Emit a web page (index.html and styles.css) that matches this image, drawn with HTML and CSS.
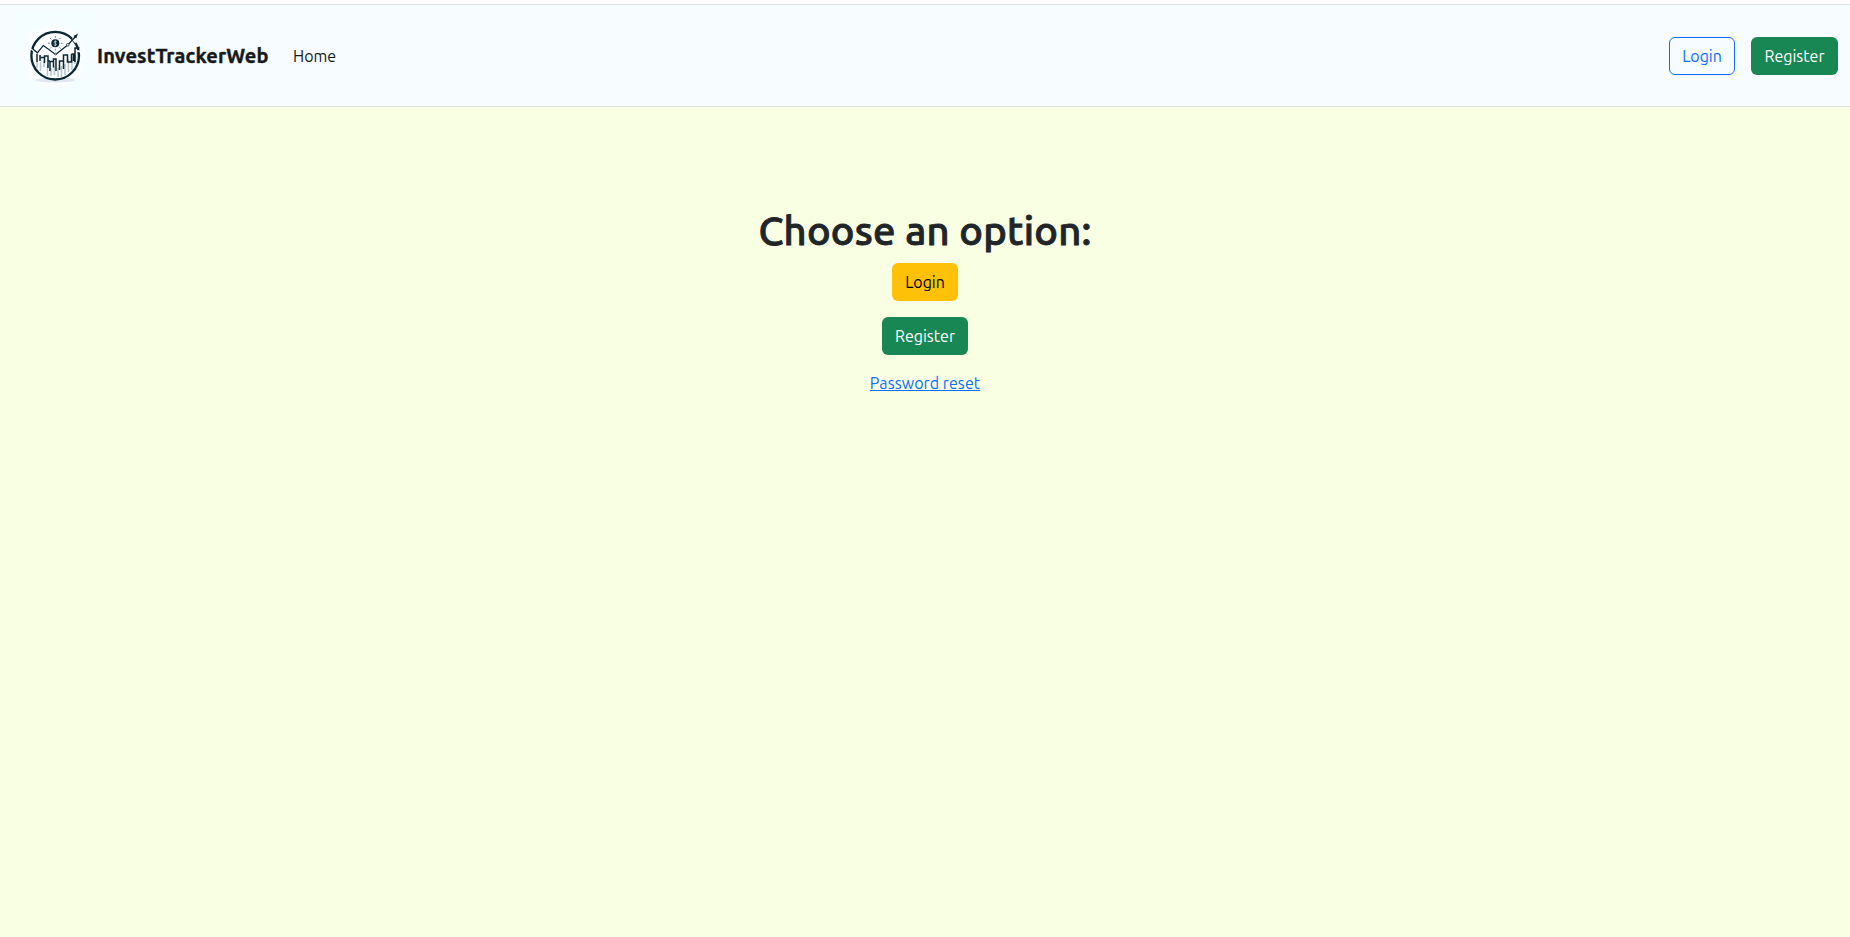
FILE: index.html
```html
<!DOCTYPE html>
<html lang="en">
<head>
<meta charset="utf-8">
<title>InvestTrackerWeb</title>
<link rel="stylesheet" href="styles.css">
</head>
<body>
<header class="navbar">
  <a class="brand" href="#">
    <svg class="logo" viewBox="0 0 84 84" aria-hidden="true">
      <defs>
        <radialGradient id="glow"><stop offset=".8" stop-color="#fbfeff"/><stop offset="1" stop-color="#f4fdff"/></radialGradient>
      </defs>
      <rect width="84" height="84" fill="#f4fdff"/>
      <circle cx="42" cy="42" r="35" fill="url(#glow)"/>
      <ellipse cx="42" cy="66" rx="20" ry="2.500" fill="#dfe8f0"/>
      <circle cx="42.200" cy="41.700" r="23.800" fill="#fcfeff" stroke="#0b2733" stroke-width="2.300"/>
      <path d="M24 47v7M27.500 48v9M31 46v7M34.500 50v12M38 54v8M41.500 52v9M45 54v9M48.500 52v11M52 50v11M55.500 45v13M59 43v13M62 42v8" stroke="#b4c4d0" stroke-width="1.500"/>
      <path d="M17 33.500l3.500 3M59.500 24.500l3.500 4M64 37l4 .5" stroke="#fcfeff" stroke-width="2"/>
      <path d="M18.500 33.800l5.800 5 6-7.300L42.700 40.500 55.300 30.500 62.500 22.500" fill="none" stroke="#0b2733" stroke-width="1.200"/>
      <path d="M60.500 22l4.500-2.500-1.800 5z" fill="#0b2733"/>
      <circle cx="54.800" cy="30.800" r="1.300" fill="#fcfeff" stroke="#0b2733" stroke-width=".8"/>
      <circle cx="42.700" cy="40" r="1" fill="#fcfeff" stroke="#0b2733" stroke-width=".6"/>
      <path d="M24 40v8M27 41v6M27 43.500h4.500M31.500 49v-7h3.500v12M35 47h2M37 57v-9.500h3.500V45h2.500v12M40.500 47.500v6M46.500 56v-9h4v8M50.500 47v-6h4v7h4v-8M58.500 40h2v7M62 48V34h4.500" fill="none" stroke="#0b2733" stroke-width="1.500"/>
      <circle cx="42.300" cy="29.300" r="4" fill="#0b2733"/>
      <path d="M43.700 27.800c-2.500-1.200-3.600.7-1.400 1.500s1 2.700-1.500 1.500M42.300 26.300v6" fill="none" stroke="#e4edf1" stroke-width=".7"/>
      <path d="M42.300 22v1.800M42.300 34.800v1.800M34.800 29.300h2M47.800 29.300h2M37 24l1.300 1.300M47.600 24L46.300 25.300M37 34.600l1.300-1.300M47.600 34.600L46.300 33.300" stroke="#667984" stroke-width=".9"/>
    </svg>
    <span class="brand-name">InvestTrackerWeb</span>
  </a>
  <a class="nav-link" href="#">Home</a>
  <div class="actions">
    <a class="btn btn-login btn-outline" href="#">Login</a>
    <a class="btn btn-register nav-register" href="#">Register</a>
  </div>
</header>
<main class="options">
  <h1 class="title">Choose an option:</h1>
  <a class="btn btn-login btn-warning" href="#">Login</a>
  <a class="btn btn-register" href="#">Register</a>
  <a class="reset" href="#">Password reset</a>
</main>
</body>
</html>
```
FILE: styles.css
```css
* { box-sizing: border-box; }
body {
  margin: 0;
  padding-top: 4px;
  min-height: 100vh;
  display: flex;
  flex-direction: column;
  background: #fff;
  color: #212529;
  font: 16px/24px Ubuntu, "Noto Sans", sans-serif;
}
.navbar {
  height: 103px;
  display: flex;
  align-items: center;
  padding: 0 12px 0 13px;
  background: #f7fcff;
  border-top: 1px solid #dee2e6;
  border-bottom: 1px solid #dee2e6;
}
.brand {
  display: flex;
  align-items: center;
  color: #16191c;
  text-decoration: none;
}
.logo { width: 84px; height: 84px; display: block; }
.brand-name {
  width: 196px;
  font-size: 20px;
  line-height: 30px;
  font-weight: 700;
  letter-spacing: 0.15px;
  -webkit-text-stroke: 0.4px;
  white-space: nowrap;
}
.nav-link {
  color: #16191c;
  text-decoration: none;
}
.actions { display: flex; gap: 16px; margin-left: auto; }
.btn {
  height: 38px;
  padding: 6px 0;
  border: 1px solid transparent;
  border-radius: 6px;
  text-align: center;
  text-decoration: none;
  white-space: nowrap;
}
.btn-login { width: 66px; }
.btn-outline { border-color: #0d6efd; color: #0d6efd; }
.btn-warning { background: #ffc107; color: #000; margin-bottom: 16px; }
.btn-register { width: 86px; background: #198754; color: #fff; }
.nav-register { width: 87px; }
.options {
  flex: 1;
  display: flex;
  flex-direction: column;
  align-items: center;
  padding-top: 100px;
  background: #f9ffe3;
}
.title {
  margin: 0 0 8px;
  font-size: 40px;
  line-height: 48px;
  font-weight: 500;
  letter-spacing: 0.22px;
  -webkit-text-stroke: 0.9px;
}
.reset {
  margin-top: 16px;
  color: #0d6efd;
  letter-spacing: 0.07px;
}
```
